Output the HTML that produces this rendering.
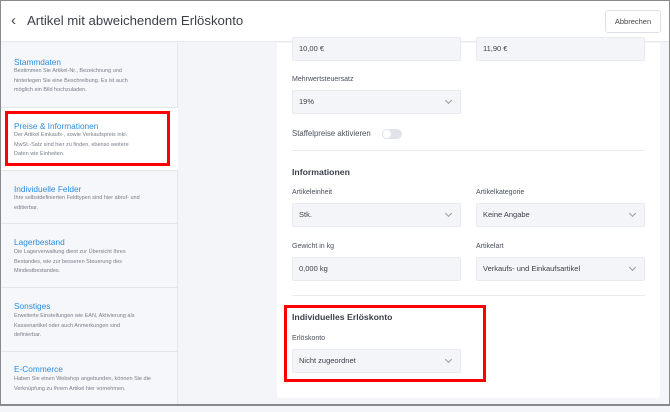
<!DOCTYPE html>
<html><head><meta charset="utf-8"><style>
*{box-sizing:border-box;margin:0;padding:0}
body{width:670px;height:406px;overflow:hidden;font-family:"Liberation Sans",sans-serif;background:#f4f5f8;position:relative;color:#3a3f4a}
.frame{position:absolute;left:0;top:0;width:670px;height:406px;border:1px solid #8a8a8a;border-bottom-width:2px;z-index:10;pointer-events:none}
.hdr{position:absolute;left:0;top:0;width:670px;height:42px;background:#fff;border-bottom:1px solid #e6e8ee}
.hdr .t{position:absolute;left:27px;top:13px;font-size:13.2px;color:#3a3f4a}
.hdr .b{position:absolute;left:11px;top:12px;font-size:15px;color:#3a3f4a}
.btn{position:absolute;left:605px;top:10px;width:56px;height:23px;border:1px solid #dde0e6;border-radius:3px;font-size:7.5px;text-align:center;line-height:21px;color:#444;background:#fff}
.side{position:absolute;left:0;top:43px;width:178px;height:363px;background:#f6f7fa;border-right:1px solid #e6e8ee}
.it{position:absolute;left:0;width:178px;border-bottom:1px solid #e3e5ea}
.it h4{font-size:8.3px;font-weight:normal;color:#2a8be0;position:absolute;left:14px}
.it p{font-size:5.5px;line-height:9.5px;color:#777d88;position:absolute;left:14px;width:136px}
.card{position:absolute;left:277px;top:43px;width:383px;height:355px;background:#fff;border-radius:0 0 3px 3px}
.in{position:absolute;height:24px;background:#f4f5f8;border:1px solid #e8eaef;border-radius:2px;font-size:7.5px;padding-left:6px;line-height:22px;color:#3a3f4a}
.in .c{position:absolute;right:9px;top:7px;width:5px;height:5px;border-right:1px solid #999;border-bottom:1px solid #999;transform:rotate(45deg)}
.lb{position:absolute;font-size:7px;color:#4a4f5a}
.h{position:absolute;font-size:8.7px;font-weight:bold;color:#3a3f4a}
.hr{position:absolute;height:1px;background:#e8eaef}
.red{position:absolute;border:3px solid #f00}
</style></head><body>
<div class="hdr"><span class="b">&#8249;</span><span class="t">Artikel mit abweichendem Erlöskonto</span><div class="btn">Abbrechen</div></div>
<div class="side">
<div class="it" style="top:0;height:65px"><h4 style="top:14px">Stammdaten</h4><p style="top:24px;width:128px">Bestimmen Sie Artikel-Nr., Bezeichnung und hinterlegen Sie eine Beschreibung. Es ist auch möglich ein Bild hochzuladen.</p></div>
<div class="it" style="top:65px;height:63px;background:#fff"><h4 style="top:13px">Preise &amp; Informationen</h4><p style="top:23px;width:130px">Der Artikel Einkaufs-, sowie Verkaufspreis inkl. MwSt.-Satz sind hier zu finden, ebenso weitere Daten wie Einheiten.</p></div>
<div class="it" style="top:128px;height:53px"><h4 style="top:13px">Individuelle Felder</h4><p style="top:23px;width:130px">Ihre selbstdefinierten Feldtypen sind hier abruf- und editierbar.</p></div>
<div class="it" style="top:181px;height:64px"><h4 style="top:13px">Lagerbestand</h4><p style="top:24px;width:128px">Die Lagerverwaltung dient zur Übersicht Ihres Bestandes, wie zur besseren Steuerung des Mindestbestandes.</p></div>
<div class="it" style="top:245px;height:64px"><h4 style="top:13px">Sonstiges</h4><p style="top:24px;width:128px">Erweiterte Einstellungen wie EAN, Aktivierung als Kassenartikel oder auch Anmerkungen sind definierbar.</p></div>
<div class="it" style="top:309px;height:60px;border:0"><h4 style="top:12px">E-Commerce</h4><p style="top:23px;width:140px">Haben Sie einen Webshop angebunden, können Sie die Verknüpfung zu Ihrem Artikel hier vornehmen.</p></div>
</div>
<div class="red" style="left:5px;top:111px;width:165px;height:55px"></div>
<div class="card"></div>
<div class="in" style="left:292px;top:37px;width:169px">10,00 €</div>
<div class="in" style="left:476px;top:37px;width:169px">11,90 €</div>
<div class="lb" style="left:292px;top:76px">Mehrwertsteuersatz</div>
<div class="in" style="left:292px;top:90px;width:169px">19%<span class="c"></span></div>
<div class="lb" style="left:292px;top:129px;font-size:7.8px">Staffelpreise aktivieren</div>
<div style="position:absolute;left:382px;top:129px;width:20px;height:10px;border-radius:5px;background:#e0e3e9"><div style="position:absolute;left:1px;top:1px;width:8px;height:8px;border-radius:50%;background:#fff"></div></div>
<div class="hr" style="left:292px;top:150px;width:353px"></div>
<div class="h" style="left:292px;top:167px">Informationen</div>
<div class="lb" style="left:292px;top:189px">Artikeleinheit</div>
<div class="lb" style="left:476px;top:189px">Artikelkategorie</div>
<div class="in" style="left:292px;top:203px;width:169px">Stk.<span class="c"></span></div>
<div class="in" style="left:476px;top:203px;width:169px">Keine Angabe<span class="c"></span></div>
<div class="lb" style="left:292px;top:243px">Gewicht in kg</div>
<div class="lb" style="left:476px;top:243px">Artikelart</div>
<div class="in" style="left:292px;top:257px;width:169px">0,000 kg</div>
<div class="in" style="left:476px;top:257px;width:169px">Verkaufs- und Einkaufsartikel<span class="c"></span></div>
<div class="hr" style="left:292px;top:295px;width:353px"></div>
<div class="red" style="left:284px;top:305px;width:202px;height:77px"></div>
<div class="h" style="left:292px;top:312px">Individuelles Erlöskonto</div>
<div class="lb" style="left:292px;top:335px">Erlöskonto</div>
<div class="in" style="left:292px;top:349px;width:169px">Nicht zugeordnet<span class="c"></span></div>
<div class="frame"></div>
</body></html>
